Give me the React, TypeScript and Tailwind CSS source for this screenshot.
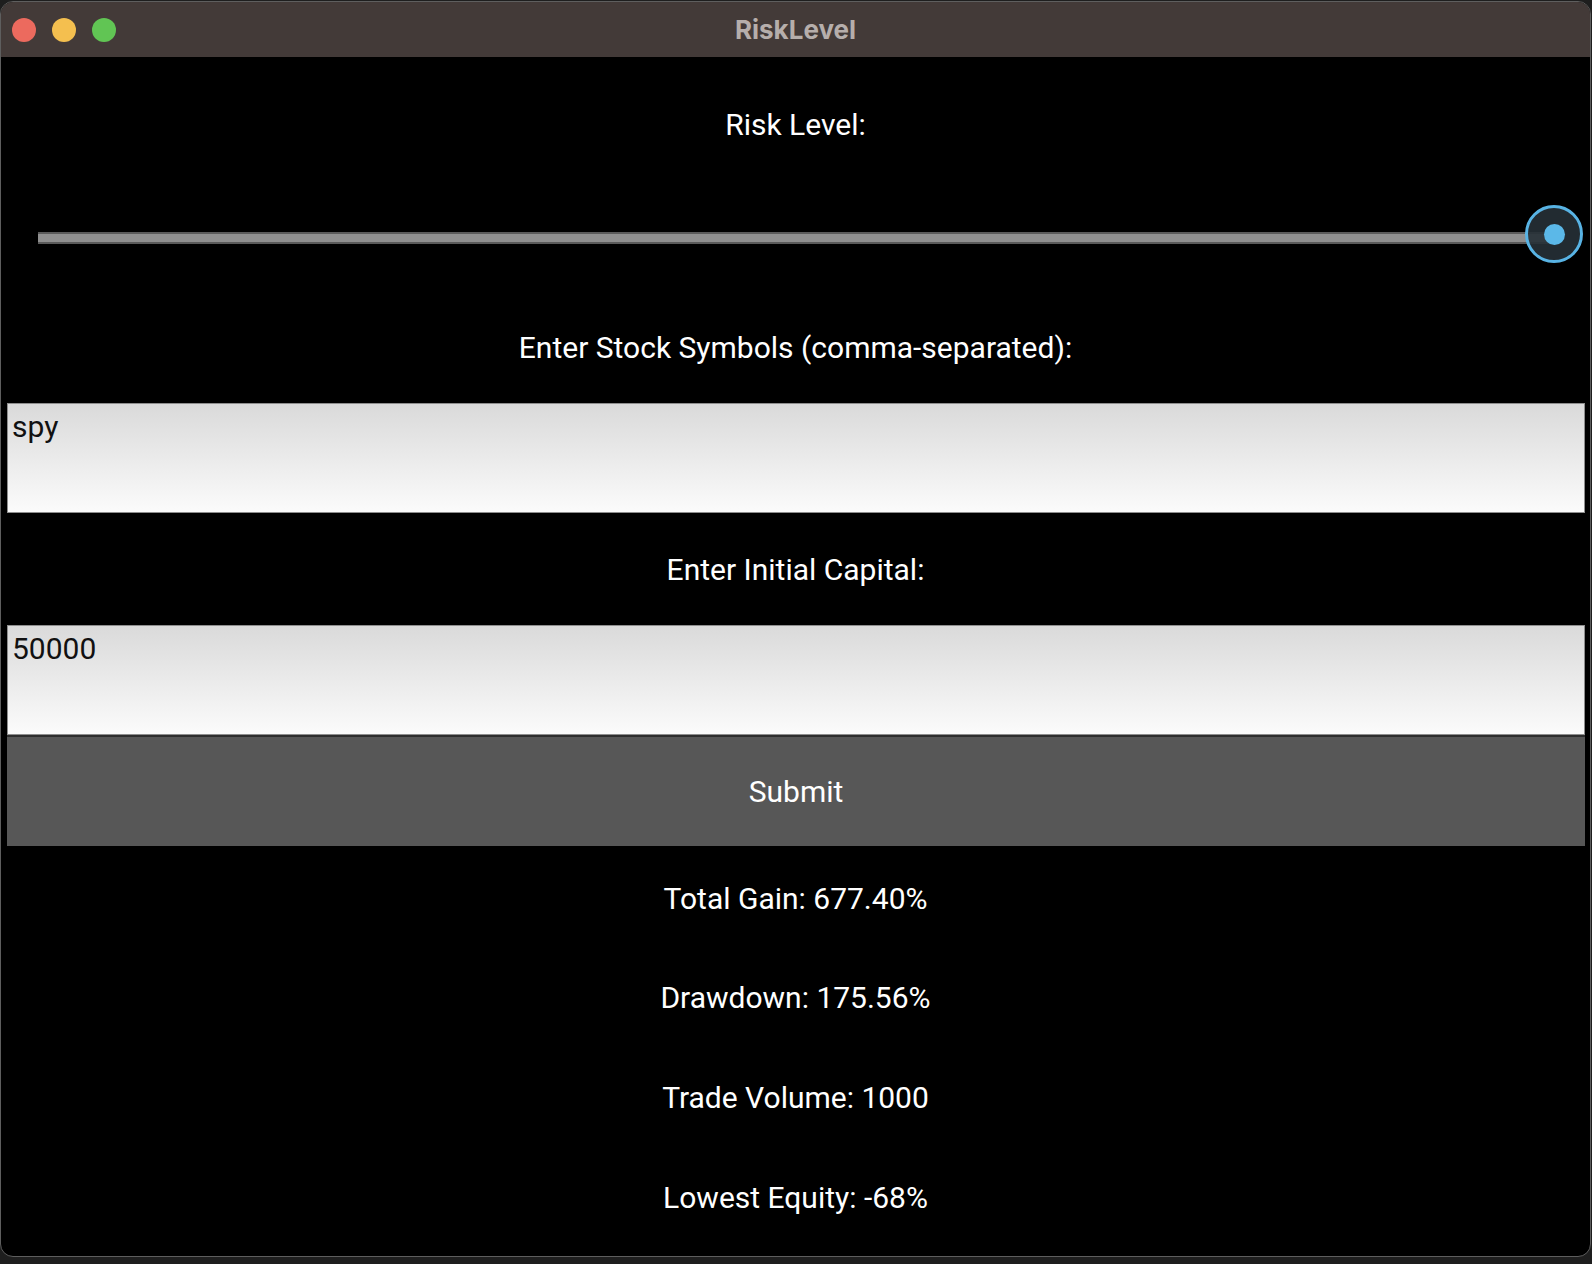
import React from "react";

const roboto = { fontFamily: "Roboto, 'Noto Sans', sans-serif" } as React.CSSProperties;

function Label({ text, h }: { text: string; h: string }) {
  return (
    <div className={`${h} flex items-center justify-center text-white text-[30px] leading-[35px]`}>
      {text}
    </div>
  );
}

function Input({ value, h }: { value: string; h: string }) {
  return (
    <div
      className={`${h} ml-[6px] mr-[5px] border border-[#8e8e8e] bg-gradient-to-b from-[#dadada] to-[#fbfbfb] px-[4px] py-[5px] text-[30px] leading-[35px] text-[#111]`}
    >
      {value}
    </div>
  );
}

export default function App() {
  return (
    <div className="w-[1592px] h-[1264px] bg-[#1e1e1e] pt-[1px]" style={roboto}>
      <div className="h-[1256px] w-[1591px] rounded-[13px] border border-[#5e5e5e] bg-black overflow-hidden flex flex-col">
        {/* Title bar */}
        <div className="h-[55px] shrink-0 bg-[#433a38] relative flex items-center justify-center">
          <div className="absolute left-[11px] top-[16px] flex gap-[16px]">
            <div className="w-[24px] h-[24px] rounded-full bg-[#ec6a5e]" />
            <div className="w-[24px] h-[24px] rounded-full bg-[#f4bf4f]" />
            <div className="w-[24px] h-[24px] rounded-full bg-[#61c554]" />
          </div>
          <div
            className="text-[26px] font-bold text-[#b6aeab] mt-[-1px]"
            style={{ fontFamily: "Inter, 'Liberation Sans', sans-serif" }}
          >
            RiskLevel
          </div>
        </div>

        {/* Content */}
        <div className="flex flex-col pt-[12px]">
          <Label text="Risk Level:" h="h-[111px]" />

          {/* Slider */}
          <div className="h-[111px] relative pt-[52px] pl-[37px]">
            <div className="w-[1516px] h-[12px] border-y-[2px] border-y-[#5a5a5a] bg-[#8f8f8f]" />
            <div className="absolute left-[1524px] top-[25px] w-[58px] h-[58px] rounded-full border-[3px] border-[#58b3e4] bg-[#263036]/90 flex items-center justify-center">
              <div className="w-[21px] h-[21px] rounded-full bg-[#5bb8e8]" />
            </div>
          </div>

          <Label text="Enter Stock Symbols (comma-separated):" h="h-[112px]" />
          <Input value="spy" h="h-[110px]" />
          <Label text="Enter Initial Capital:" h="h-[112px]" />
          <Input value="50000" h="h-[110px]" />
          <div className="h-[2px] bg-[#2e2e2e] ml-[6px] mr-[5px]" />
          <div className="h-[109px] ml-[6px] mr-[5px] bg-[#575757] flex items-center justify-center text-white text-[30px] leading-[35px]">
            Submit
          </div>

          <div className="h-[2px]" />
          <Label text="Total Gain: 677.40%" h="h-[100px]" />
          <Label text="Drawdown: 175.56%" h="h-[99px]" />
          <Label text="Trade Volume: 1000" h="h-[100px]" />
          <Label text="Lowest Equity: -68%" h="h-[100px]" />
        </div>
      </div>
    </div>
  );
}
